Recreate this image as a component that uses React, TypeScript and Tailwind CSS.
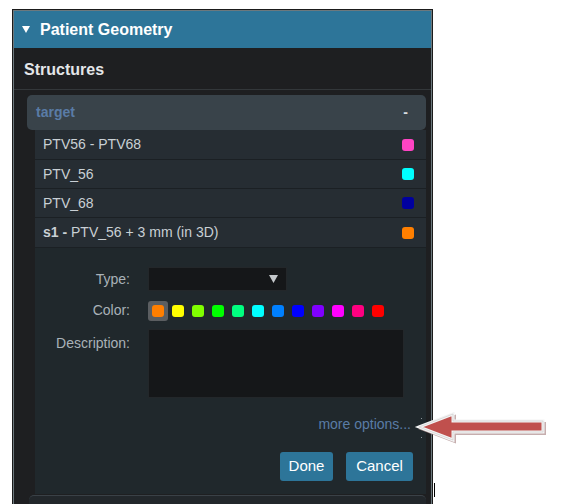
import React from 'react';

const structures = [
  { label: 'PTV56 - PTV68', color: '#ff44c4', h: 'h-[30px]' },
  { label: 'PTV_56', color: '#00ffff', h: 'h-[29px]' },
  { label: 'PTV_68', color: '#00009f', h: 'h-[29px]' },
];

const palette = [
  '#ff7f00', '#ffff00', '#80ff00', '#00ff00', '#00ff80', '#00ffff',
  '#0080ff', '#0000ff', '#8000ff', '#ff00ff', '#ff0080', '#ff0000',
];

const Swatch: React.FC<{ color: string }> = ({ color }) => (
  <span className="block w-3 h-3 rounded-[3px]" style={{ backgroundColor: color }} />
);

const RedArrow: React.FC = () => (
  <svg className="absolute left-[413px] top-[408px]" width="140" height="40" viewBox="0 0 140 40">
    {/* shadow */}
    <polygon
      points="8,21 42,8 42,15 132,15 132,26 42,26 42,34"
      fill="#b89a9a"
      stroke="#b89a9a"
      strokeWidth="2"
      opacity="0.8"
    />
    <polygon
      points="6,19 40,6 40,13 130,13 130,24 40,24 40,32"
      fill="#c0504d"
      stroke="#f4f4f4"
      strokeWidth="3"
    />
    <polygon
      points="6,19 40,6 40,13 130,13 130,24 40,24 40,32"
      fill="none"
      stroke="#c9c9c9"
      strokeWidth="0.6"
    />
  </svg>
);

export default function App() {
  return (
    <div className="relative h-[504px] overflow-hidden bg-white font-['Liberation_Sans',Arial,sans-serif]">
      <div className="ml-[12px] mt-[9px] w-[421px] h-[500px] border border-[#1b1b1b] border-b-0">
        <div className="h-full border border-[#6c787d] border-b-0 bg-[#1e1f21]">
          {/* panel header */}
          <div className="h-[37px] bg-[#2d7599] flex items-center pl-[8px] gap-[10px]">
            <svg width="8" height="7" viewBox="0 0 8 7">
              <polygon points="0,0 8,0 4,7" fill="#ffffff" />
            </svg>
            <span className="text-white font-bold text-[16px]">Patient Geometry</span>
          </div>

          {/* structures title */}
          <div className="h-[42px] flex items-center pl-[10px] pt-[3px] border-b border-[#33373a]">
            <span className="text-[#e4e6e8] font-bold text-[16px]">Structures</span>
          </div>

          <div className="ml-[13px] mr-[5px] mt-[5px]">
            {/* group header */}
            <div className="h-[35px] rounded-[5px] bg-[#39434a] flex items-center justify-between pl-[9px] pr-[18px]">
              <span className="text-[#5a7ca6] font-bold text-[14px]">target</span>
              <span className="text-[#d8dde0] font-bold text-[14px]">-</span>
            </div>

            <div className="ml-[8px]">
              {structures.map((s) => (
                <div
                  key={s.label}
                  className={`${s.h} bg-[#262d33] border-b border-[#1b2024] flex items-center justify-between pl-[8px] pr-[12px]`}
                >
                  <span className="text-[#c9d0d5] text-[14px]">{s.label}</span>
                  <Swatch color={s.color} />
                </div>
              ))}
              <div className="h-[30px] bg-[#262d33] border-b border-[#1b2024] flex items-center justify-between pl-[8px] pr-[12px]">
                <span className="text-[#c9d0d5] text-[14px]">
                  <b>s1 -</b> PTV_56 + 3 mm (in 3D)
                </span>
                <Swatch color="#ff7f00" />
              </div>

              {/* expanded editor */}
              <div className="bg-[#20282c] pt-[19px] pb-[13px]">
                <div className="grid grid-cols-[95px_1fr] gap-x-[18px] items-center">
                  <span className="text-right text-[#a9b2b8] text-[14px]">Type:</span>
                  <div className="w-[139px] h-[24px] bg-[#151719] border border-[#23272a] flex items-center justify-end pr-[8px]">
                    <svg width="9" height="8" viewBox="0 0 9 8">
                      <polygon points="0,0 9,0 4.5,8" fill="#c4c8cb" />
                    </svg>
                  </div>

                  <span className="text-right text-[#a9b2b8] text-[14px] mt-[9px]">Color:</span>
                  <div className="flex mt-[9px]">
                    {palette.map((c, i) => (
                      <div
                        key={c}
                        className={
                          i === 0
                            ? 'w-5 h-5 rounded-[3px] bg-[#5b5e61] flex items-center justify-center'
                            : 'w-5 h-5 flex items-center justify-center'
                        }
                      >
                        <Swatch color={c} />
                      </div>
                    ))}
                  </div>

                  <span className="self-start text-right text-[#a9b2b8] text-[14px] mt-[12px]">Description:</span>
                  <div className="mt-[8px] w-[256px] h-[69px] bg-[#151719] border border-[#23272a]" />
                </div>

                <div className="flex justify-end pr-[15px] mt-[16px]">
                  <span className="text-[#5a7ca6] text-[14px]">more options...</span>
                </div>

                <div className="flex justify-end gap-[13px] pr-[13px] mt-[17px]">
                  <button className="w-[53px] h-[29px] rounded-[3px] bg-[#2d7599] text-white text-[15px]">Done</button>
                  <button className="w-[67px] h-[29px] rounded-[3px] bg-[#2d7599] text-white text-[15px]">Cancel</button>
                </div>
              </div>
            </div>
          </div>

          {/* next group, cut off */}
          <div className="ml-[15px] mr-[5px] mt-[1px] h-[12px] rounded-t-[5px] bg-[#22272b] border-t border-[#3a4147]" />
        </div>
      </div>

      {/* focus dots next to the link */}
      <span className="absolute left-[421px] top-[418px] w-px h-px bg-[#8a9399]" />
      <span className="absolute left-[421px] top-[437px] w-px h-px bg-[#8a9399]" />

      <RedArrow />

      {/* text caret */}
      <span className="absolute left-[434px] top-[483px] w-px h-[14px] bg-black" />
    </div>
  );
}
